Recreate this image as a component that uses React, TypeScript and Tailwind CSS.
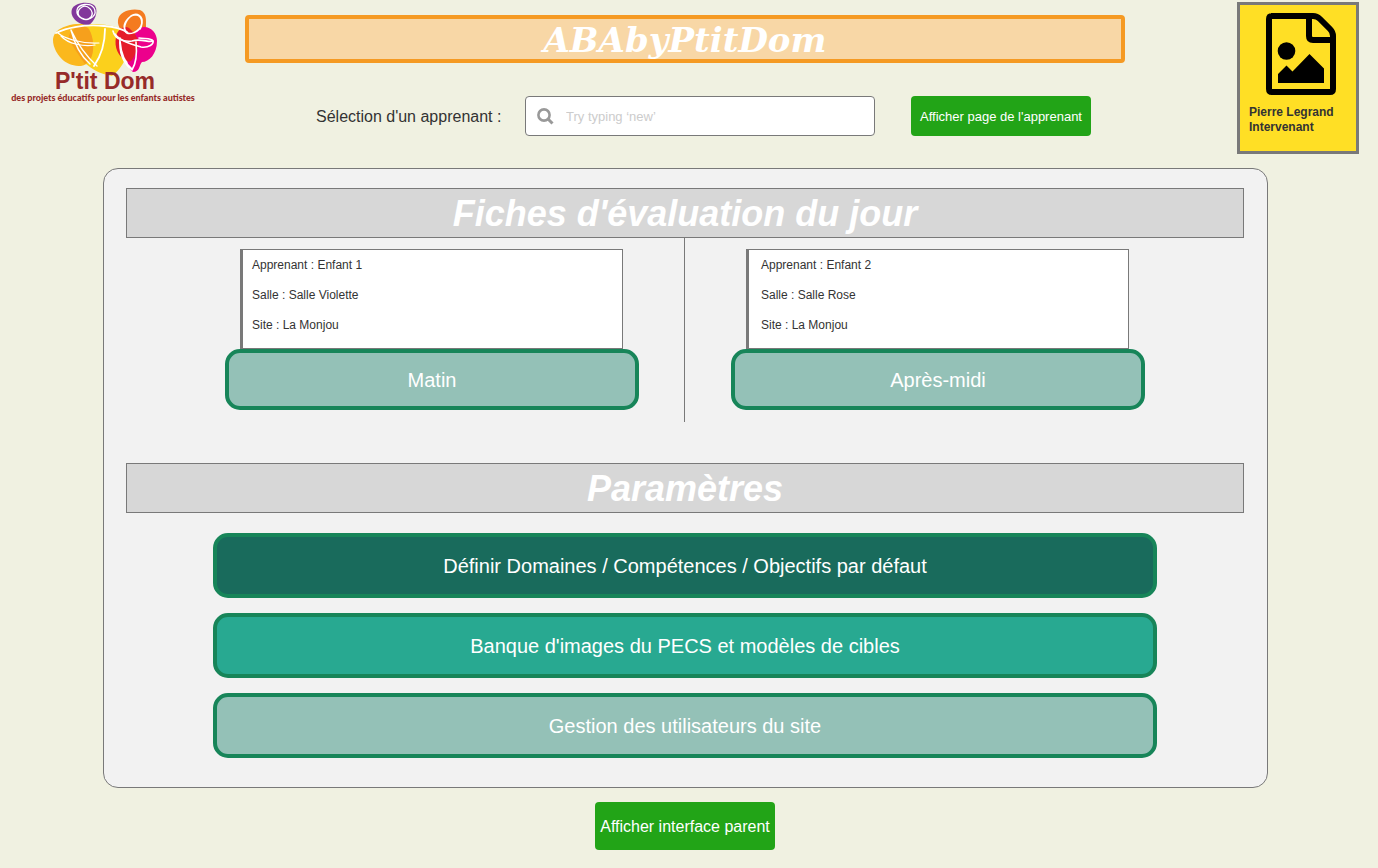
import React from "react";

const sessions = [
  { period: "Matin", learner: "Enfant 1", room: "Salle Violette", site: "La Monjou", inset: "pl-[9px]" },
  { period: "Après-midi", learner: "Enfant 2", room: "Salle Rose", site: "La Monjou", inset: "pl-3" },
];

const settings = [
  { label: "Définir Domaines / Compétences / Objectifs par défaut", tone: "bg-[#196b5c]" },
  { label: "Banque d'images du PECS et modèles de cibles", tone: "bg-[#28a991]" },
  { label: "Gestion des utilisateurs du site", tone: "bg-[#94c1b7]" },
];

function Logo() {
  return (
    <svg viewBox="0 0 210 110" className="h-[110px] w-[210px]" role="img" aria-label="P'tit Dom">
      <path d="M60 32C66 25 76 23 90 24C106 24 124 26 127 36C132 52 122 69 112 76C100 74 92 69 86 64Z" fill="#fbd01c" />
      <path d="M53 40C53 30 66 24 80 24C91 28 93 37 93 47C93 56 89 65 81 66C74 66 68 64 64 61C58 56 53 48 53 40Z" fill="#fbb81d" />
      <path d="M69 36C71 28 84 23 89 29C94 38 95 52 90 60L85 64C80 57 74 48 71 43C69 40 68 38 69 36Z" fill="#f6a01c" />
      <path d="M72 9C74 3 89 0 95 6C99 12 94 22 89 25C80 26 69 18 72 9Z" fill="#82379b" />
      <path d="M118 20C119 12 130 8 140 10C147 13 146 20 146 27C145 34 138 38 131 38C123 35 117 27 118 20Z" fill="#f47b20" />
      <path d="M139 28C149 24 157 32 157 41C157 54 149 62 142 62C139 65 140 72 133 72C128 69 125 60 129 51C132 44 133 34 139 28Z" fill="#ec008c" />
      <path d="M116 37C117 30 124 25 129 28C137 35 141 42 137 50C134 56 132 64 127 61C118 57 114 47 116 37Z" fill="#e51d2a" />
      <g fill="none" stroke="#fff" strokeLinecap="round" strokeLinejoin="round">
        <path d="M56 33C66 28 84 24 104 26C116 27 122 29 127 32" strokeWidth="1.8" />
        <path d="M58 33C64 38 80 44 99 43M61 36C68 44 84 47 95 45" strokeWidth="1.2" />
        <path d="M71 30C77 43 86 56 97 66M71 30C75 46 83 58 90 64" strokeWidth="1.4" />
        <path d="M105 29C105 42 101 56 94 66" strokeWidth="1.8" />
        <path d="M77 10C78 4 90 2 94 8C98 15 90 21 84 19C76 17 77 10 82 7C87 4 95 11 91 17C86 23 76 17 77 10" strokeWidth="1.3" />
        <path d="M140 29C144 22 141 14 135 15C129 15 123 24 125 31C128 36 140 33 142 23C143 16 137 12 131 16C126 20 122 26 126 32" strokeWidth="1.6" />
        <path d="M113 31C115 39 123 42 132 41C141 38 149 43 153 41C152 38 145 39 139 38" strokeWidth="1.6" />
        <path d="M115 34C120 41 131 44 141 47C149 48 154 44 153 41" strokeWidth="1.5" />
        <path d="M120 38C119 50 122 62 132 70C137 62 137 52 136 42M120 41C121 54 126 64 132 69" strokeWidth="1.6" />
      </g>
      <text x="105" y="89" textAnchor="middle" fontFamily="Liberation Sans, Arial, sans-serif" fontWeight="700" fontSize="23" fill="#962b29">P'tit Dom</text>
      <text x="103" y="101" textAnchor="middle" fontFamily="Lato, sans-serif" fontWeight="900" fontSize="9" fill="#962b29">des projets éducatifs pour les enfants autistes</text>
    </svg>
  );
}

function FileImageIcon() {
  return (
    <svg viewBox="0 0 70 82" className="ml-[26px] h-[82px] w-[70px]" aria-hidden="true">
      <path d="M5 3H47Q51 3 54 6L64 16Q67 19 67 23V76Q67 79 64 79H6Q3 79 3 76V6Q3 3 6 3Z" fill="none" stroke="#000" strokeWidth="6" />
      <path d="M43 3V23Q43 27 47 27H67" fill="none" stroke="#000" strokeWidth="6" />
      <circle cx="20.5" cy="38" r="8.8" />
      <path d="M12 70V61L20.5 52.5L26.5 58.5L43.5 41L58 55.5V70Z" />
    </svg>
  );
}

function SearchIcon() {
  return (
    <svg viewBox="0 0 17 17" className="h-[17px] w-[17px] shrink-0" fill="none" stroke="#999" aria-hidden="true">
      <circle cx="7" cy="7" r="5.6" strokeWidth="2.6" />
      <path d="M11 11L15.5 15.5" strokeWidth="3" />
    </svg>
  );
}

function Banner({ children }: { children: React.ReactNode }) {
  return (
    <h2 className="flex h-[50px] items-center justify-center border border-[#797979] bg-[#d7d7d7] pt-[2px] text-4xl font-bold text-white italic">
      {children}
    </h2>
  );
}

export default function App() {
  return (
    <div className="min-h-screen bg-[#f0f1e1] pr-2 pb-[18px] font-['Liberation_Sans',Arial,sans-serif] text-[#333]">
      <header className="grid h-[168px] grid-cols-[1fr_minmax(0,880px)_1fr] items-start">
        <Logo />
        <div className="pt-[15px]">
          <h1 className="flex h-12 items-center justify-center rounded border-4 border-[#f59a23] bg-[#f8d7a6] pt-[2px] font-['DejaVu_Serif',Georgia,serif] text-[34px] font-bold text-white italic">
            ABAbyPtitDom
          </h1>
          <div className="mt-[33px] flex items-center pl-[71px]">
            <label htmlFor="learner" className="w-[209px] pt-[2px] text-base">
              Sélection d'un apprenant :
            </label>
            <div className="flex h-10 w-[350px] items-center gap-3 rounded border border-[#797979] bg-white pl-[11px]">
              <SearchIcon />
              <input
                id="learner"
                type="text"
                placeholder="Try typing ‘new’"
                className="h-full min-w-0 flex-1 bg-transparent text-[13px] outline-none placeholder:text-[#ccc]"
              />
            </div>
            <button type="button" className="ml-9 h-10 w-[180px] rounded bg-[#22a417] pt-[2px] text-[13px] text-white">
              Afficher page de l'apprenant
            </button>
          </div>
        </div>
        <aside className="mt-[2px] mr-[11px] h-[152px] w-[122px] justify-self-end border-3 border-[#797979] bg-[#ffdf25] pt-2">
          <FileImageIcon />
          <p className="mt-[10px] pl-[9px] text-xs leading-[15px] font-bold">
            Pierre Legrand
            <br />
            Intervenant
          </p>
        </aside>
      </header>

      <main className="mr-[102px] ml-[103px] rounded-[15px] border border-[#797979] bg-[#f2f2f2] pt-[19px] pr-[23px] pb-[29px] pl-[22px]">
        <section>
          <Banner>Fiches d'évaluation du jour</Banner>
          <div className="grid grid-cols-[1fr_2px_1fr] gap-x-[45px] px-[99px]">
            {sessions.map((s, i) => (
              <React.Fragment key={s.period}>
                {i > 0 && <div className="h-[184px] border-l border-[#797979]" />}
                <article className="pt-[11px]">
                  <div
                    className={`mr-4 ml-[15px] flex h-[100px] flex-col gap-[15px] border border-l-3 border-[#797979] bg-white pt-2 text-xs leading-[15px] ${s.inset}`}
                  >
                    <p>Apprenant : {s.learner}</p>
                    <p>Salle : {s.room}</p>
                    <p>Site : {s.site}</p>
                  </div>
                  <button
                    type="button"
                    className="h-[61px] w-full rounded-[15px] border-4 border-[#178559] bg-[#94c1b7] text-xl text-white"
                  >
                    {s.period}
                  </button>
                </article>
              </React.Fragment>
            ))}
          </div>
        </section>

        <section className="mt-[41px]">
          <Banner>Paramètres</Banner>
          <div className="mt-5 flex flex-col gap-[15px] px-[87px]">
            {settings.map((s) => (
              <button
                key={s.label}
                type="button"
                className={`h-[65px] rounded-[15px] border-4 border-[#178559] text-xl text-white ${s.tone}`}
              >
                {s.label}
              </button>
            ))}
          </div>
        </section>
      </main>

      <footer className="mt-[14px] flex justify-center">
        <button type="button" className="h-12 w-[180px] rounded bg-[#22a417] pt-[2px] text-base text-white">
          Afficher interface parent
        </button>
      </footer>
    </div>
  );
}
